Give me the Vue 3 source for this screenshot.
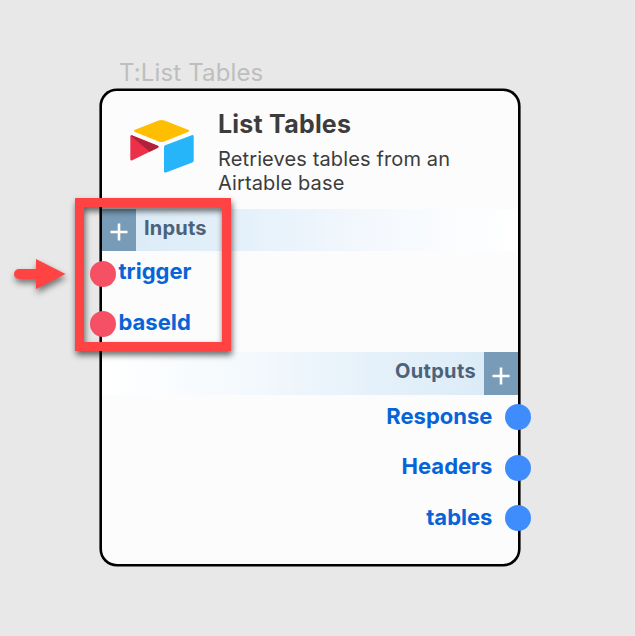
<script setup>
const inputs = ['trigger', 'baseId']
const outputs = ['Response', 'Headers', 'tables']
</script>

<template>
  <main class="canvas">
    <div class="node-name"><span>T:List Tables</span></div>
    <section class="node">
      <header class="head">
        <svg class="logo" width="66" height="56" viewBox="0 0 66 56">
          <path fill="#ffbf00" d="M29.500 1.600Q32.500.4 35.500 1.600L59 10.700Q61.200 11.800 59 12.900L35.200 22.500Q32.500 23.500 29.700 22.500L6 12.900Q3.800 11.800 6 10.700Z" />
          <path fill="#26b5f8" d="M35 27.900Q35 26.700 36.200 26.200L62.700 16.200Q64.700 15.700 64.700 17.500V41.500Q64.700 43 63.300 43.600L37 53.500Q35 54 35 52.200Z" />
          <path fill="#ed3049" d="M1.300 17.500Q1.300 15.800 3 16.300L28.800 26.700Q30.600 27.800 28.800 28.800L3.300 41.300Q1.300 42 1.300 40.300Z" />
          <path fill="#b22137" d="M2.500 16.200L28.800 26.700Q30.600 27.800 28.800 28.800L20.800 32.800L1.900 17Z" />
        </svg>
        <div class="summary">
          <h1>List Tables</h1>
          <p>Retrieves tables from an<br />Airtable base</p>
        </div>
      </header>

      <div class="band band-in">
        <button class="add" aria-label="Add input">
          <svg width="18" height="18" viewBox="0 0 18 18"><path d="M9 .5V17.500M.5 9H17.500" /></svg>
        </button>
        <span class="band-label">Inputs</span>
      </div>
      <ul class="ports ports-in">
        <li v-for="name in inputs" :key="name"><i class="dot"></i><span>{{ name }}</span></li>
      </ul>

      <div class="band band-out">
        <span class="band-label">Outputs</span>
        <button class="add" aria-label="Add output">
          <svg width="18" height="18" viewBox="0 0 18 18"><path d="M9 .5V17.500M.5 9H17.500" /></svg>
        </button>
      </div>
      <ul class="ports ports-out">
        <li v-for="name in outputs" :key="name"><span>{{ name }}</span><i class="dot"></i></li>
      </ul>
    </section>

    <div class="highlight"></div>
    <svg class="arrow" width="62" height="44" viewBox="0 0 62 44">
      <path fill="#ff4343" d="M9 14H26V4L55.500 19L26 34V24H9A5 5 0 0 1 9 14Z" />
    </svg>
  </main>
</template>

<style>
body {
  margin: 0;
  background: #e8e8e8;
}
</style>

<style scoped>
.canvas {
  position: relative;
  box-sizing: border-box;
  width: 635px;
  height: 636px;
  padding: 57px 115px 0 100px;
  overflow: hidden;
  background: #e8e8e8;
  font-family: Inter, "Liberation Sans", sans-serif;
}
.node-name {
  height: 32px;
  padding-left: 19px;
  font-size: 24px;
  letter-spacing: 0.13px;
  line-height: 32px;
  color: #bebebe;
  white-space: nowrap;
}
.node {
  box-sizing: border-box;
  width: 420px;
  height: 477px;
  border: 2px solid #000;
  border-radius: 17px;
  background: #fcfcfc;
  box-shadow: 0 0 0 0.6px #000;
}
.head {
  display: flex;
  height: 118px;
}
.logo {
  flex: none;
  margin: 28px 0 0 27px;
}
.summary {
  padding: 17px 0 0 23px;
  color: #3c3c3c;
  white-space: nowrap;
}
h1 {
  margin: 0;
  font-size: 25px;
  letter-spacing: 0.22px;
  line-height: 32px;
  font-weight: 700;
}
p {
  margin: 7px 0 0;
  font-size: 20px;
  letter-spacing: 0.13px;
  line-height: 24px;
}
.band {
  display: flex;
  height: 42px;
  color: #4b627a;
  font-size: 20px;
  letter-spacing: 0.2px;
  font-weight: 700;
}
.band-in {
  background: linear-gradient(90deg, #d9eaf6, #e5f1fa 35%, #f4f8fd 65%, #fff);
}
.band-out {
  height: 43px;
  justify-content: flex-end;
  letter-spacing: 0.35px;
  background: linear-gradient(270deg, #d9eaf6, #e5f1fa 35%, #f4f9fd 65%, #fff);
}
.band-label {
  padding: 0 8px;
  line-height: 38px;
}
.add {
  display: flex;
  align-items: center;
  justify-content: center;
  width: 34px;
  height: 100%;
  padding: 3px 1px 0 0;
  border: 0;
  background: #789bb7;
}
.band-out .add {
  padding: 4px 0 0;
}
.add path {
  fill: none;
  stroke: #fff;
  stroke-width: 2.6;
}
.ports {
  margin: 0;
  padding: 0;
  list-style: none;
  color: #0764d8;
  font-size: 22px;
  font-weight: 700;
}
.ports li {
  display: flex;
  height: 50px;
  line-height: 41px;
}
.ports-in {
  height: 101px;
}
.ports-in li + li {
  line-height: 43px;
}
.dot {
  flex: none;
  width: 26px;
  height: 26px;
  border-radius: 50%;
}
.ports-in .dot {
  margin: 10px 3px 0 -12.5px;
  background: #f55064;
}
.ports-out li {
  height: 50.5px;
  justify-content: flex-end;
  line-height: 42px;
}
.ports-out li:nth-child(2) {
  line-height: 41px;
}
.ports-out .dot {
  margin: 9.4px -13.3px 0 12.9px;
  background: #3f8cfc;
}
.highlight {
  position: absolute;
  left: 75px;
  top: 198px;
  box-sizing: border-box;
  width: 156px;
  height: 153px;
  border: 9px solid #ff4343;
  filter: drop-shadow(1px 4px 3px rgba(0, 0, 0, 0.6));
}
.arrow {
  position: absolute;
  left: 10px;
  top: 255px;
  overflow: visible;
  filter: drop-shadow(1px 4px 3px rgba(0, 0, 0, 0.5));
}
</style>
